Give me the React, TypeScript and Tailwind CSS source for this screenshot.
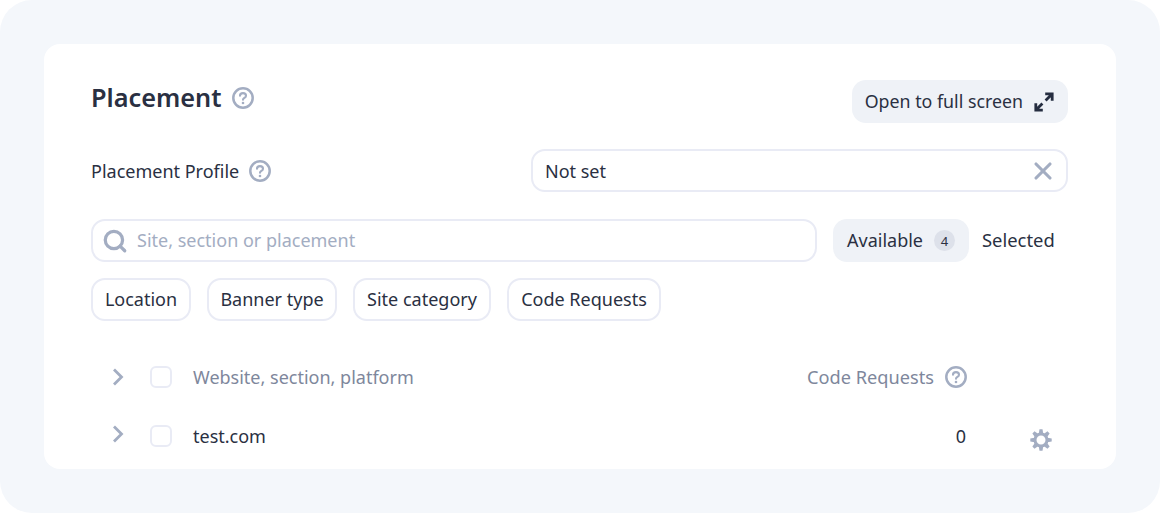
import React from 'react';
import { Search, X } from 'lucide-react';

const font = "font-['Noto_Sans',sans-serif]";

const Help = ({ className = '' }: { className?: string }) => (
  <svg width="22" height="22" viewBox="0 0 22 22" fill="none" className={className}>
    <circle cx="11" cy="11" r="9.7" stroke="#a3adc2" strokeWidth="2.5" />
    <path d="M8 8.8c0-1.6 1.3-2.7 3-2.7s3 1.1 3 2.6c0 2.3-3 2.1-3 4.1" stroke="#a3adc2" strokeWidth="2.1" strokeLinecap="round" />
    <circle cx="11" cy="16" r="1.3" fill="#a3adc2" />
  </svg>
);

const Expand = () => (
  <svg width="20" height="20" viewBox="0 0 20 20" fill="none" stroke="#252d40" strokeWidth="2.8">
    <path d="M11.2 1.8h7v7M17.8 2.2l-6.2 6.2M8.8 18.2h-7v-7M2.2 17.8l6.2-6.2" />
  </svg>
);

const Gear = () => (
  <svg width="22" height="22" viewBox="0 0 22 22" fill="#a3adc2">
    <circle cx="11" cy="11" r="6" fill="none" stroke="#a3adc2" strokeWidth="3" />
    {[0, 45, 90, 135, 180, 225, 270, 315].map(a => (
      <path key={a} d="M9.5 0.3h3l.7 4.2h-4.4z" transform={`rotate(${a} 11 11)`} />
    ))}
  </svg>
);

const Chevron = ({ className = '' }: { className?: string }) => (
  <svg width="12" height="18" viewBox="0 0 12 18" fill="none" stroke="#a3adc2" strokeWidth="2.8" className={className}>
    <path d="M2 1.5L9.5 9L2 16.5" />
  </svg>
);

const Checkbox = () => <div className="w-[22px] h-[22px] rounded-[6px] border-2 border-[#e9ebf5] bg-white shrink-0" />;

const Chip = ({ label, className }: { label: string; className: string }) => (
  <div className={`h-[43px] pb-[2px] flex items-center justify-center rounded-[14px] border-2 border-[#e9ebf5] ${className}`}>{label}</div>
);

export default function App() {
  return (
    <div className={`h-[513px] bg-white ${font} text-[18px] leading-[24px] text-[#2a3042]`}>
      <div className="h-full bg-[#f4f7fb] rounded-[32px] p-[44px]">
        <div className="h-[425px] bg-white rounded-[16px] overflow-hidden pl-[47px] pr-[48px] pt-[36px]">
          {/* Header */}
          <div className="flex items-start justify-between h-[43px]">
            <div className="flex items-center gap-[10px] h-[35px]">
              <h1 className="text-[25.3px] leading-[35px] font-semibold pb-[1px]">Placement</h1>
              <Help className="mt-[1px]" />
            </div>
            <button className="h-[43px] pb-[2px] pl-[13px] pr-[14px] flex items-center gap-[11px] rounded-[14px] bg-[#eff2f7] text-[17.8px]">
              Open to full screen
              <span className="mt-[2px]"><Expand /></span>
            </button>
          </div>

          {/* Profile */}
          <div className="flex items-center mt-[26px] h-[43px]">
            <div className="w-[440px] flex items-center gap-[10px]">
              <span>Placement Profile</span>
              <Help />
            </div>
            <div className="flex-1 h-[43px] pl-[12px] pr-[9px] flex items-center justify-between rounded-[14px] border-2 border-[#e9ebf5]">
              <span>Not set</span>
              <X size={28} color="#a3adc2" strokeWidth={2.7} />
            </div>
          </div>

          {/* Search */}
          <div className="flex items-center mt-[27px] h-[43px]">
            <div className="w-[726px] h-[43px] pl-[9px] flex items-center gap-[9px] rounded-[14px] border-2 border-[#e9ebf5]">
              <Search size={26} color="#a3adc2" strokeWidth={3} />
              <span className="text-[#a3adc2] pb-[2px]">Site, section or placement</span>
            </div>
            <div className="ml-[16px] h-[43px] pl-[14px] pr-[14px] flex items-center gap-[11px] rounded-[14px] bg-[#eff2f7]">
              <span className="pb-[2px]">Available</span>
              <span className="w-[21px] h-[21px] rounded-full bg-[#dde1ea] text-[13px] flex items-center justify-center">4</span>
            </div>
            <span className="ml-[13px] pb-[2px] text-[18.4px]">Selected</span>
          </div>

          {/* Filters */}
          <div className="flex items-center gap-[16px] mt-[16px]">
            <Chip label="Location" className="w-[100px]" />
            <Chip label="Banner type" className="w-[130px]" />
            <Chip label="Site category" className="w-[138px]" />
            <Chip label="Code Requests" className="w-[154px]" />
          </div>

          {/* Table */}
          <div className="flex items-center mt-[34px] h-[43px] text-[#7e879c]">
            <Chevron className="ml-[21px]" />
            <div className="ml-[26px]"><Checkbox /></div>
            <span className="ml-[21px] flex-1">Website, section, platform</span>
            <span className="text-[18.2px]">Code Requests</span>
            <Help className="ml-[11px] mr-[101px]" />
          </div>
          <div className="flex items-center mt-[16px] h-[43px]">
            <Chevron className="ml-[21px] -mt-[4px]" />
            <div className="ml-[26px]"><Checkbox /></div>
            <span className="ml-[21px] flex-1">test.com</span>
            <span>0</span>
            <div className="ml-[64px] mr-[16px] mt-[9px]"><Gear /></div>
          </div>
        </div>
      </div>
    </div>
  );
}
